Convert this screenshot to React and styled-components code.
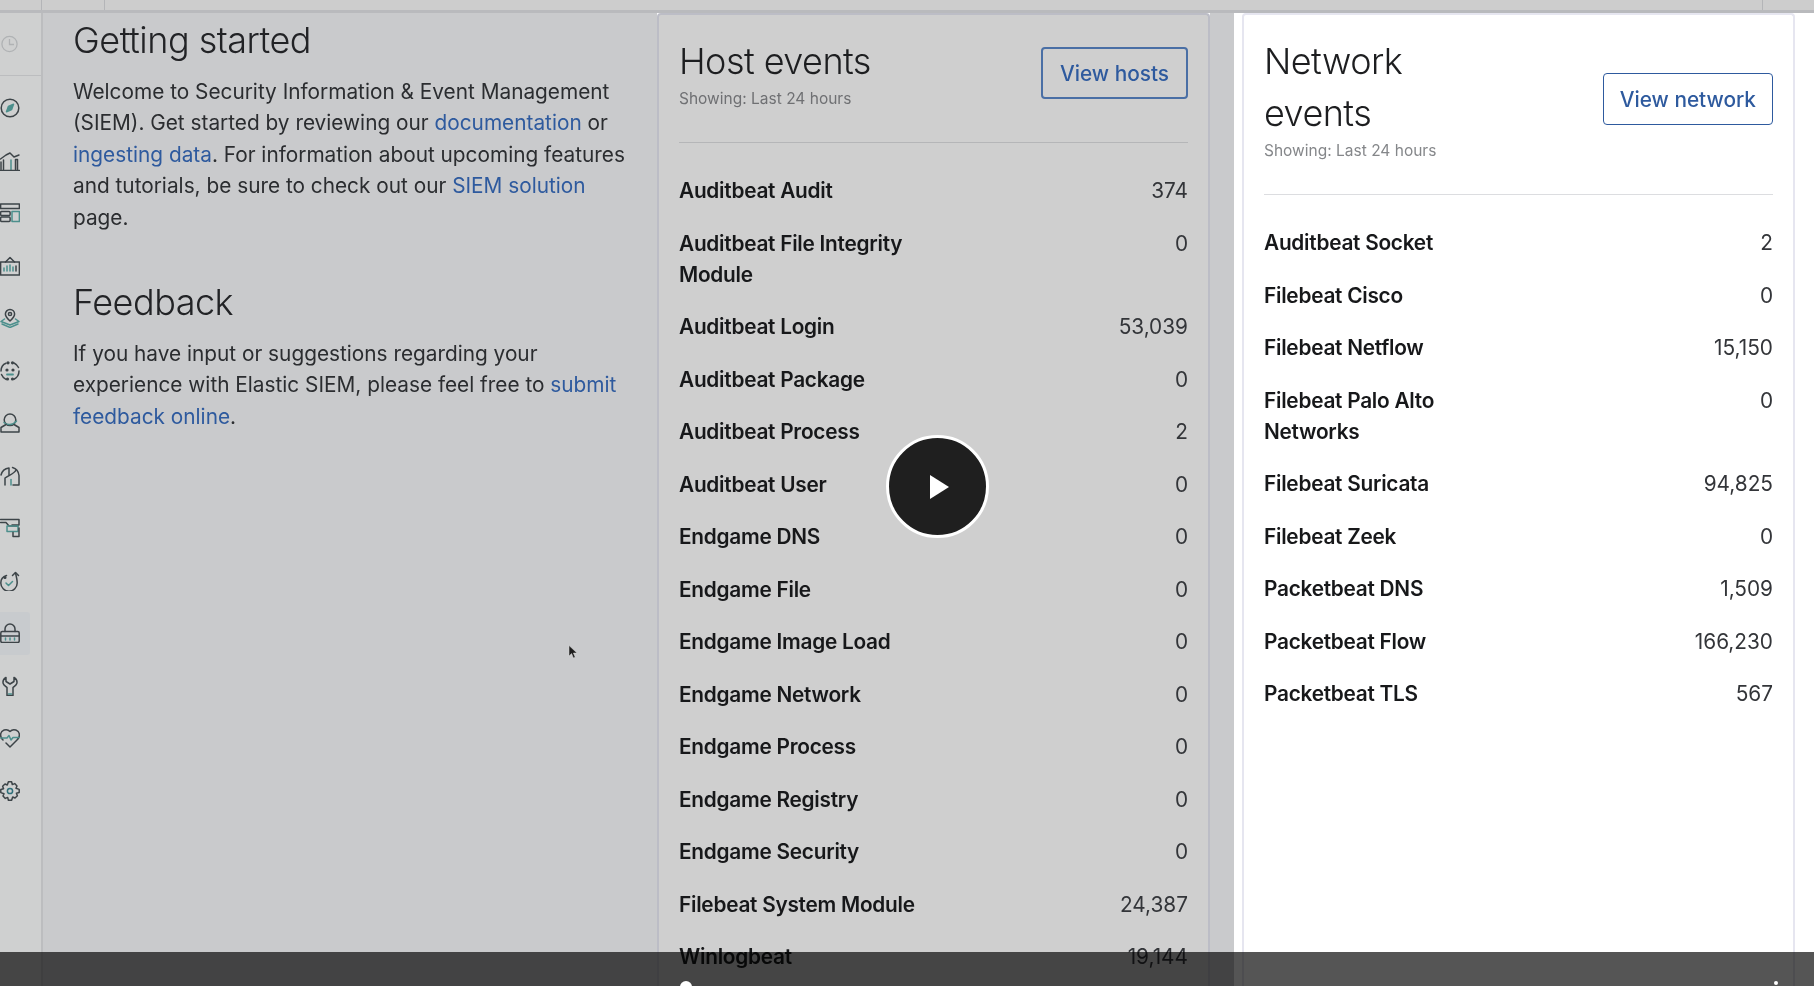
import React from 'react'
import styled, { createGlobalStyle } from 'styled-components'

const GlobalStyle = createGlobalStyle`
  html, body {
    margin: 0;
    height: 100%;
    overflow: hidden;
    background: #fbfbfd;
  }
  * {
    box-sizing: border-box;
  }
`

const hostEvents = [
  ['Auditbeat Audit', '374'],
  ['Auditbeat File Integrity Module', '0'],
  ['Auditbeat Login', '53,039'],
  ['Auditbeat Package', '0'],
  ['Auditbeat Process', '2'],
  ['Auditbeat User', '0'],
  ['Endgame DNS', '0'],
  ['Endgame File', '0'],
  ['Endgame Image Load', '0'],
  ['Endgame Network', '0'],
  ['Endgame Process', '0'],
  ['Endgame Registry', '0'],
  ['Endgame Security', '0'],
  ['Filebeat System Module', '24,387'],
  ['Winlogbeat', '19,144'],
]

const networkEvents = [
  ['Auditbeat Socket', '2'],
  ['Filebeat Cisco', '0'],
  ['Filebeat Netflow', '15,150'],
  ['Filebeat Palo Alto Networks', '0'],
  ['Filebeat Suricata', '94,825'],
  ['Filebeat Zeek', '0'],
  ['Packetbeat DNS', '1,509'],
  ['Packetbeat Flow', '166,230'],
  ['Packetbeat TLS', '567'],
]

const Frame = styled.div`
  height: 986px;
  overflow: hidden;
  position: relative;
  font-family: Inter, "Liberation Sans", sans-serif;
  color: #2b2d30;
  filter: blur(0.5px);
`

const TopBar = styled.div`
  display: flex;
  height: 13px;
  background: #cdcdcd;
  border-bottom: 3px solid #b9babd;
`

const TopCell = styled.div`
  width: ${({ $width }) => $width};
  flex: ${({ $grow }) => ($grow ? 1 : 'none')};
  border-right: ${({ $noLine }) => ($noLine ? 'none' : '1px solid #b4b5b8')};
`

const Body = styled.div`
  display: flex;
  height: 973px;
`

const Sidebar = styled.div`
  width: 43px;
  flex: none;
  background: #cfd0d0;
  border-right: 2px solid #bcbdbf;
`

const RecentBlock = styled.div`
  height: 63px;
  display: flex;
  align-items: center;
  border-bottom: 1px solid #bcbdbf;
`

const NavList = styled.div`
  display: flex;
  flex-direction: column;
  padding-top: 6px;
`

const NavItem = styled.div`
  height: 52.5px;
  display: flex;
  align-items: center;
`

const NavIcon = styled.div`
  width: 30px;
  height: 43px;
  display: flex;
  align-items: center;
  border-radius: 0 3px 3px 0;
  background: ${({ $active }) => ($active ? '#c8cbce' : 'transparent')};
`

const LeftPanel = styled.div`
  width: 614px;
  flex: none;
  background: #c9cacc;
  padding: 6px 18px 0 30px;
`

const SectionTitle = styled.h2`
  margin: ${({ $first }) => ($first ? '0' : '48px 0 0')};
  font-size: 36px;
  line-height: 42px;
  font-weight: 300;
  letter-spacing: -0.5px;
  color: #222326;
`

const Paragraph = styled.p`
  margin: 15px 0 0;
  font-size: 20.8px;
  line-height: 31.4px;
`

const TextLink = styled.a`
  color: #2e5a9e;
`

const Card = styled.div`
  flex: none;
  width: ${({ $width }) => $width};
  padding: 20px 20px 0;
  border: 2px solid ${({ $lit }) => ($lit ? '#e6e6f0' : '#bcbdc6')};
  border-bottom: none;
  border-radius: 4px 4px 0 0;
  background: ${({ $lit }) => ($lit ? '#ffffff' : '#cfcfcf')};
`

const Gutter = styled.div`
  width: 24px;
  flex: none;
  background: #c9cacc;
`

const NetworkWrap = styled.div`
  flex: 1;
  display: flex;
  background: #ffffff;
  padding-left: 8px;
`

const CardHeader = styled.div`
  display: flex;
  align-items: center;
  justify-content: space-between;
  padding-bottom: 31px;
  border-bottom: 1px solid ${({ $lit }) => ($lit ? '#dcdde0' : '#b5b6b8')};
`

const CardHeading = styled.div`
  width: 230px;
`

const CardTitle = styled.h3`
  margin: 0;
  font-size: 36px;
  line-height: 52px;
  font-weight: 300;
  letter-spacing: -0.55px;
  color: #1d1e20;
`

const Showing = styled.div`
  font-size: 15.5px;
  line-height: 24px;
  color: ${({ $lit }) => ($lit ? '#85878a' : '#6f7073')};
`

const ViewButton = styled.button`
  height: 52px;
  padding: 0 ${({ $focused }) => ($focused ? '17px' : '16px')};
  font-family: inherit;
  font-size: 20.8px;
  font-weight: 500;
  color: #2e5a9e;
  background: transparent;
  border: ${({ $focused }) => ($focused ? '2px solid #4a6fa5' : '1px solid #2e5a9e')};
  border-radius: 4px;
`

const RowList = styled.div`
  display: flex;
  flex-direction: column;
  gap: 21.1px;
  padding-top: 32px;
`

const Row = styled.div`
  display: flex;
  justify-content: space-between;
  font-size: 20.8px;
  line-height: 31.4px;
`

const RowLabel = styled.div`
  max-width: 50%;
  font-weight: 600;
  letter-spacing: -0.25px;
  color: #17181a;
`

const RowValue = styled.div`
  color: #333539;
`

const Controls = styled.div`
  position: absolute;
  left: 0;
  right: 0;
  bottom: 0;
  height: 34px;
  background: rgba(0, 0, 0, 0.667);
`

const ScrubDot = styled.div`
  position: absolute;
  left: ${({ $left }) => $left}px;
  top: 29px;
  width: ${({ $size }) => $size}px;
  height: ${({ $size }) => $size}px;
  border-radius: 50%;
  background: #ffffff;
`

const PlayButton = styled.div`
  position: absolute;
  left: 886px;
  top: 435px;
  width: 103px;
  height: 103px;
  border: 3px solid #ffffff;
  border-radius: 50%;
  background: #1f1f1f;
  display: flex;
  align-items: center;
  justify-content: center;
  padding-left: 4px;
`

const Pointer = styled.svg`
  position: absolute;
  left: 568px;
  top: 645px;
`

const Glyph = ({ children }) => (
  <svg width="20" height="20" viewBox="0 0 20 20" fill="none" stroke="#3d4448" strokeWidth="1.5" strokeLinecap="round" strokeLinejoin="round">
    {children}
  </svg>
)

const teal = '#4c8f8c'

const navIcons = [
  <Glyph key="discover">
    <circle cx="10" cy="10" r="8.8" />
    <path d="M13.5 6.2 11.6 11.6 6.5 13.8 8.4 8.4Z" fill={teal} stroke={teal} />
  </Glyph>,
  <Glyph key="visualize">
    <path d="M0.5 8 6 4 10 2 14 6 19 4" />
    <path d="M1 18.5V11M3.5 18.5V9" />
    <path d="M11 18.5V9" stroke={teal} />
    <path d="M17.5 18.5V8.5H15.5V18.5" />
    <path d="M0.5 19.5H19.5" />
  </Glyph>,
  <Glyph key="dashboard">
    <rect x="0.6" y="1" width="18.8" height="4.5" />
    <rect x="0.6" y="8.5" width="9.5" height="4" rx="1" />
    <rect x="0.6" y="14" width="9.5" height="4.5" rx="1" />
    <rect x="12" y="8.5" width="7.4" height="10" stroke={teal} />
  </Glyph>,
  <Glyph key="canvas">
    <rect x="0.6" y="6" width="18.8" height="13" />
    <path d="M5.5 6 10 1.5 14.5 6" />
    <path d="M4 15V12M7 15V10M10 15V9M13 15V11" stroke={teal} />
    <path d="M16 15V10" />
  </Glyph>,
  <Glyph key="maps">
    <path d="M10 1.5a4.6 4.6 0 0 1 4.6 4.6C14.6 9 10 13 10 13S5.4 9 5.4 6.1A4.6 4.6 0 0 1 10 1.5Z" />
    <circle cx="10" cy="6" r="1.6" />
    <path d="M4.5 11 1 13.5 10 17 19 13.5 15.5 11" stroke={teal} />
    <path d="M2 16 10 19.5 18 16" stroke={teal} />
  </Glyph>,
  <Glyph key="ml">
    <path d="M6 2.2C3 3.4 1 6.4 1 10M1.5 13.5C2.5 16 4 17.4 6 18.4M14 18.2C17 16.8 19 13.8 19 10M18.5 6.5C17.5 4.4 16 3 14 2" />
    <g fill="#3d4448" stroke="none">
      <circle cx="8" cy="1.8" r="1.6" />
      <circle cx="12.5" cy="1.8" r="1.6" />
      <circle cx="7" cy="9" r="1.6" />
      <circle cx="13" cy="9" r="1.6" />
      <circle cx="7.5" cy="18" r="1.6" />
      <circle cx="12.5" cy="18" r="1.6" />
    </g>
    <path d="M7 13.5H13" stroke={teal} strokeWidth="1.8" />
  </Glyph>,
  <Glyph key="metrics">
    <circle cx="10" cy="6.8" r="5.8" />
    <path d="M4 9.5C7 12.5 13 12.5 16.5 8" stroke={teal} />
    <path d="M6 11.5 1 14.5V19H19V14.5L14 11.5" />
  </Glyph>,
  <Glyph key="logs">
    <path d="M1 9C2 5 5 2.5 9 2V9" />
    <path d="M5 19V12C9 9 14 8 16 4" />
    <path d="M11 19V13.5" stroke={teal} />
    <path d="M12.5 1.5C16 2.5 18.5 5.5 19 9.5V19H13" />
  </Glyph>,
  <Glyph key="uptime">
    <path d="M0.5 1.5H19V7H12" />
    <path d="M0.5 4.5H6L9 8H18" />
    <rect x="7" y="8" width="11" height="5.5" stroke={teal} />
    <path d="M13 14.5V18.5H19V10" />
  </Glyph>,
  <Glyph key="apm">
    <path d="M6.5 4.5C3 5.5 0.8 8.5 0.8 12A8.2 8.2 0 0 0 17.2 12C17.2 9 16.5 6 15.5 2" />
    <path d="M12.5 4.5 15.5 1.5 18.5 4.5" />
    <circle cx="5" cy="6.5" r="0.8" fill="#3d4448" />
    <path d="M6 12 8.5 14.5 12.5 10.5" stroke={teal} />
  </Glyph>,
  <Glyph key="siem">
    <path d="M5 8.5V6A5 5 0 0 1 15 6V8.5" />
    <rect x="0.8" y="8.5" width="18.4" height="11" rx="1.5" />
    <path d="M1 13H19" />
    <path d="M5.5 15V17M10 15V17M14.5 15V17" stroke={teal} />
  </Glyph>,
  <Glyph key="devtools">
    <path d="M6 1.5C3.5 3 2.5 5 3.2 7.5 3.8 9.5 6 10.5 7 11.5V19.5H13V11.5C14 10.5 16.2 9.5 16.8 7.5 17.5 5 16.5 3 14 1.5V5.5L10 8 6 5.5Z" />
    <path d="M8.5 18H11.5" stroke={teal} />
  </Glyph>,
  <Glyph key="monitoring">
    <path d="M3 12C1.4 10.5 0.6 9 0.6 7A5.4 5.4 0 0 1 10 3.5 5.4 5.4 0 0 1 19.4 7C19.4 9 18.6 10.5 17 12L10 19 6 15" />
    <path d="M0.8 10H7L9 7.5 11 12 13 9.5H19.2" stroke={teal} />
  </Glyph>,
  <Glyph key="management">
    <circle cx="10" cy="10" r="2.6" stroke="#2f6f7a" />
    <path d="M8.4 0.8H11.6L12.3 3.6 14.7 2.6 17 5 16 7.3 19.2 8.4V11.6L16.4 12.3 17.4 14.7 15 17 12.7 16 11.6 19.2H8.4L7.7 16.4 5.3 17.4 3 15 4 12.7 0.8 11.6V8.4L3.6 7.7 2.6 5.3 5 3 7.3 4Z" />
  </Glyph>,
]

const Events = ({ rows }) => (
  <RowList>
    {rows.map(([label, value]) => (
      <Row key={label}>
        <RowLabel>{label}</RowLabel>
        <RowValue>{value}</RowValue>
      </Row>
    ))}
  </RowList>
)

const App = () => {
  return (
    <Frame>
      <GlobalStyle />
      <TopBar>
        <TopCell $width="42px" />
        <TopCell $width="63px" />
        <TopCell $grow />
        <TopCell $width="51px" $noLine />
      </TopBar>
      <Body>
        <Sidebar>
          <RecentBlock>
            <svg width="20" height="20" viewBox="0 0 20 20" fill="none" stroke="#b0b2b4" strokeWidth="1.3">
              <circle cx="9.5" cy="10" r="7.6" />
              <path d="M9.5 5V10.5H14" />
            </svg>
          </RecentBlock>
          <NavList>
            {navIcons.map((icon, index) => (
              <NavItem key={index}>
                <NavIcon $active={index === 10}>{icon}</NavIcon>
              </NavItem>
            ))}
          </NavList>
        </Sidebar>

        <LeftPanel>
          <SectionTitle $first>Getting started</SectionTitle>
          <Paragraph>
            Welcome to Security Information &amp; Event Management (SIEM). Get started by reviewing our{' '}
            <TextLink>documentation</TextLink> or <TextLink>ingesting data</TextLink>. For information about upcoming
            features and tutorials, be sure to check out our <TextLink>SIEM solution</TextLink> page.
          </Paragraph>
          <SectionTitle>Feedback</SectionTitle>
          <Paragraph>
            If you have input or suggestions regarding your experience with Elastic SIEM, please feel free to{' '}
            <TextLink>submit feedback online</TextLink>.
          </Paragraph>
        </LeftPanel>

        <Card $width="553px">
          <CardHeader>
            <CardHeading>
              <CardTitle>Host events</CardTitle>
              <Showing>Showing: Last 24 hours</Showing>
            </CardHeading>
            <ViewButton $focused>View hosts</ViewButton>
          </CardHeader>
          <Events rows={hostEvents} />
        </Card>

        <Gutter />

        <NetworkWrap>
          <Card $lit $width="553px">
            <CardHeader $lit>
              <CardHeading>
                <CardTitle>Network events</CardTitle>
                <Showing $lit>Showing: Last 24 hours</Showing>
              </CardHeading>
              <ViewButton>View network</ViewButton>
            </CardHeader>
            <Events rows={networkEvents} />
          </Card>
        </NetworkWrap>
      </Body>

      <PlayButton>
        <svg width="19" height="24" viewBox="0 0 19 24">
          <path d="M0 0 19 12 0 24Z" fill="#ffffff" />
        </svg>
      </PlayButton>

      <Pointer width="10" height="14" viewBox="0 0 10 14">
        <path d="M1 0.5V11L3.6 8.6 5.4 13 7.2 12.2 5.4 8H9Z" fill="#1c1c1c" stroke="#d8d8d8" strokeWidth="0.5" />
      </Pointer>

      <Controls>
        <ScrubDot $left={680} $size={12} />
        <ScrubDot $left={1774} $size={4} />
      </Controls>
    </Frame>
  )
}

export default App
